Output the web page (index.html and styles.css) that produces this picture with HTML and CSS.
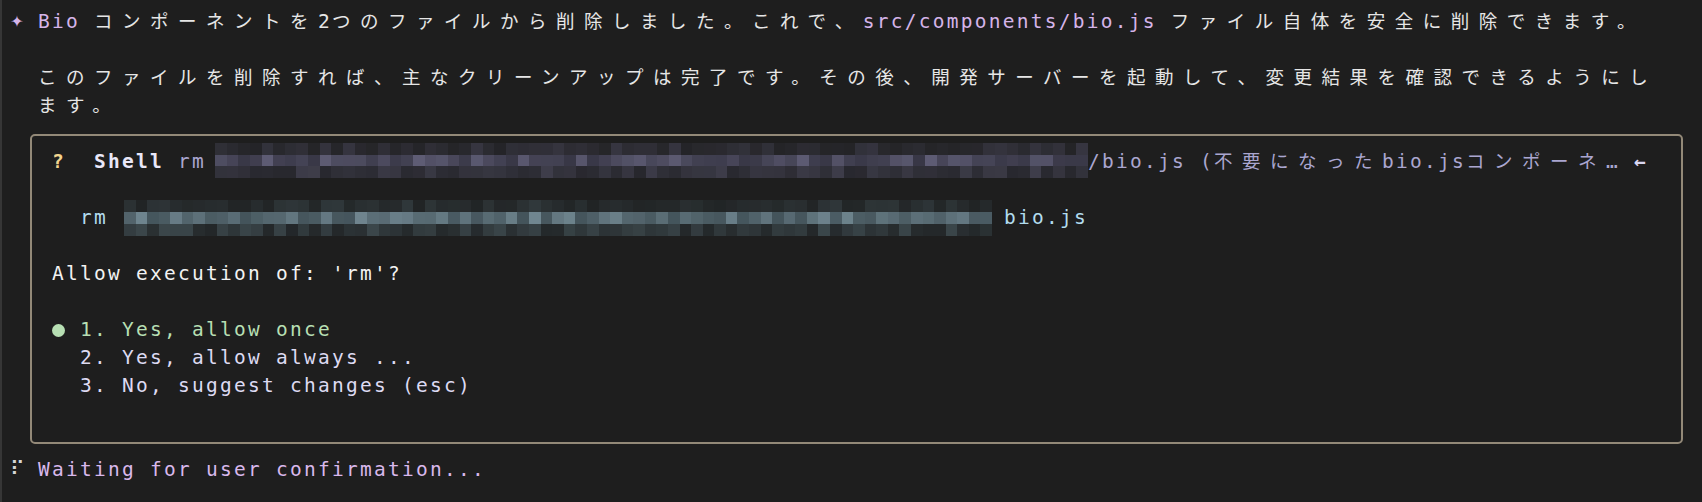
FILE: index.html
```html
<!DOCTYPE html>
<html lang="ja">
<head>
<meta charset="utf-8">
<title>Gemini CLI</title>
<link rel="stylesheet" href="styles.css">
</head>
<body>
<div class="term">
<div class="row"><span class="cell star">✦</span> <span class="p">Bio</span> <span class="w">コンポーネントを</span>2<span class="w">つのファイルから削除しました。これで、</span><span class="p">src/components/bio.js</span> <span class="w">ファイル自体を安全に削除できます。</span></div>
<div class="row"></div>
<div class="row">  <span class="w">このファイルを削除すれば、主なクリーンアップは完了です。その後、開発サーバーを起動して、変更結果を確認できるようにし</span></div>
<div class="row">  <span class="w">ます。</span></div>
<div class="box">
<div class="row"><span class="q">?</span>  <span class="b">Shell</span><span class="g"> rm </span><span class="mzwrap head"><span class="mz" data-seed="17" data-theme="lav"></span></span><span class="g">/bio.js (<span class="w">不要になった</span>bio.js<span class="w">コンポーネ</span>… </span><span class="arrow">←</span></div>
<div class="row"></div>
<div class="row"><span class="c">  rm </span><span class="mzwrap cmd"><span class="mz" data-seed="91" data-theme="cyan"></span></span><span class="c">bio.js</span></div>
<div class="row"></div>
<div class="row"><span class="allow">Allow execution of: 'rm'?</span></div>
<div class="row"></div>
<div class="row"><span class="cell"><span class="dot"></span></span> <span class="green">1. Yes, allow once</span></div>
<div class="row"><span class="opt">  2. Yes, allow always ...</span></div>
<div class="row"><span class="opt">  3. No, suggest changes (esc)</span></div>
<div class="row"></div>
</div>
<div class="row"><span class="cell spin">⠏</span> <span class="wait">Waiting for user confirmation...</span></div>
</div>
<script src="script.js"></script>
</body>
</html>
```

FILE: styles.css
```css
html {
  background: #1e1e1e;
}

body {
  margin: 0;
  min-height: 100vh;
  box-sizing: border-box;
  border-left: 2px solid #363636;
  padding: 8px 0 0 8px;
  background: #1e1e1e;
}

.term {
  font-family: "DejaVu Sans Mono", "Noto Sans CJK JP", monospace;
  font-size: 19.5px;
  letter-spacing: 2.26px;
  color: #e6e6e6;
}

.row {
  height: 28px;
  line-height: 28px;
  white-space: pre;
}

.w {
  font-size: 18.5px;
  letter-spacing: 9.5px;
}

.cell {
  display: inline-block;
  width: 14px;
  height: 28px;
  vertical-align: top;
  text-align: center;
  letter-spacing: 0;
  position: relative;
}

.star {
  color: #d5b4e9;
  font-family: "DejaVu Sans", sans-serif;
  font-size: 16px;
}

.p {
  color: #d5b4e9;
}

.box {
  margin: 14px 0 12px 20px;
  width: 1653px;
  box-sizing: border-box;
  border: 2px solid #938978;
  border-radius: 5px;
  padding: 12px 0 14px 20px;
}

.q {
  color: #f3d48e;
  font-weight: bold;
}

.b {
  font-weight: bold;
  color: #e9e7f8;
}

.g {
  color: #aaa6d0;
}

.arrow {
  color: #d9d6f0;
  font-weight: bold;
}

.c {
  color: #b2dcee;
}

.mzwrap {
  display: inline-block;
  height: 28px;
  vertical-align: top;
}

.mzwrap.head {
  width: 873px;
  margin-left: -5px;
}

.mzwrap.cmd {
  width: 868px;
  margin-left: 2px;
  margin-right: 12px;
}

.mz {
  display: grid;
  grid-template-columns: repeat(75, 1fr);
  grid-template-rows: repeat(3, 1fr);
  height: 36px;
  margin-top: -4px;
}

.mzwrap.head .mz {
  height: 35px;
  margin-top: -5px;
}

.mz i {
  display: block;
}

.allow {
  color: #f2f2f2;
}

.dot {
  position: absolute;
  left: 0;
  top: 8px;
  width: 13px;
  height: 13px;
  border-radius: 50%;
  background: #b7dfb3;
}

.green {
  color: #b7dfb3;
}

.opt {
  color: #dddaf2;
}

.spin {
  color: #d6d6d6;
}

.wait {
  color: #d9b8ec;
}
```

FILE: script.js
```js
(function () {
  function rng(seed) {
    var s = seed;
    return function () {
      s = (s * 1103515245 + 12345) & 0x7fffffff;
      return s / 0x7fffffff;
    };
  }
  var themes = {
    lav: [
      [[0x24, 0x24, 0x27], [0x36, 0x35, 0x40]],
      [[0x38, 0x37, 0x46], [0x5e, 0x5c, 0x74]],
      [[0x27, 0x27, 0x2d], [0x3e, 0x3d, 0x4a]]
    ],
    cyan: [
      [[0x21, 0x24, 0x25], [0x30, 0x38, 0x3b]],
      [[0x44, 0x54, 0x5b], [0x70, 0x86, 0x90]],
      [[0x23, 0x27, 0x29], [0x3c, 0x48, 0x4c]]
    ]
  };
  var els = document.querySelectorAll('.mz');
  for (var e = 0; e < els.length; e++) {
    var el = els[e];
    var r = rng(+el.dataset.seed);
    var th = themes[el.dataset.theme];
    for (var row = 0; row < 3; row++) {
      for (var c = 0; c < 75; c++) {
        var t = r();
        t = t * t * 0.6 + t * 0.4;
        var a = th[row][0], b = th[row][1];
        var col = [0, 1, 2].map(function (i) { return Math.round(a[i] + (b[i] - a[i]) * t); });
        var d = document.createElement('i');
        d.style.background = 'rgb(' + col.join(',') + ')';
        el.appendChild(d);
      }
    }
  }
})();
```
